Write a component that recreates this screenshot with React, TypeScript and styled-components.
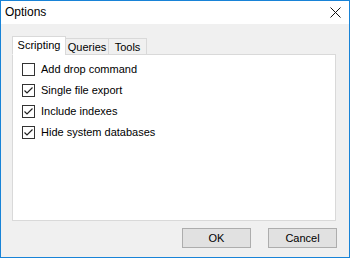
import React from 'react'
import styled, { createGlobalStyle } from 'styled-components'

const GlobalStyle = createGlobalStyle`
  html, body {
    margin: 0;
    padding: 0;
    background: #ffffff;
  }
  * {
    box-sizing: border-box;
  }
`

const Window = styled.div`
  width: 350px;
  height: 258px;
  border: 1px solid #1883d7;
  display: flex;
  flex-direction: column;
  font-family: 'Liberation Sans', Arial, sans-serif;
  font-size: 11px;
  color: #000;
  overflow: hidden;
`

const TitleBar = styled.div`
  height: 23px;
  background: #ffffff;
  display: flex;
  align-items: center;
  justify-content: space-between;
  padding: 0 8px 1px 4px;
`

const Title = styled.span`
  font-size: 12px;
`

const CloseIcon = styled.svg`
  width: 11px;
  height: 11px;
  margin-top: 1px;
`

const Body = styled.div`
  flex: 1;
  background: #f0f0f0;
  display: flex;
  flex-direction: column;
  padding: 12px 11px 0 11px;
`

const TabStrip = styled.div`
  display: flex;
  align-items: flex-end;
  height: 19px;
  margin-bottom: -1px;
  position: relative;
  z-index: 1;
`

const Tab = styled.div<{ $active?: boolean; $width: number }>`
  width: ${p => p.$width}px;
  height: ${p => (p.$active ? '19px' : '17px')};
  margin-left: -1px;
  display: flex;
  align-items: center;
  justify-content: center;
  padding-bottom: ${p => (p.$active ? '1px' : '0')};
  background: ${p => (p.$active ? '#ffffff' : '#f0f0f0')};
  border: 1px solid #d9d9d9;
  border-bottom: 1px solid ${p => (p.$active ? '#ffffff' : '#d9d9d9')};
  &:first-child {
    margin-left: 0;
  }
`

const Panel = styled.div`
  height: 167px;
  margin-right: 2px;
  background: #ffffff;
  border: 1px solid #d9d9d9;
  padding: 8px 0 0 9px;
  display: flex;
  flex-direction: column;
  gap: 8px;
`

const Row = styled.label`
  display: flex;
  align-items: center;
  gap: 6px;
  height: 13px;
  line-height: 13px;
`

const Box = styled.span`
  width: 13px;
  height: 13px;
  border: 1px solid #333333;
  background: #ffffff;
  display: flex;
  align-items: center;
  justify-content: center;
  flex-shrink: 0;
`

const ButtonRow = styled.div`
  display: flex;
  justify-content: flex-end;
  gap: 17px;
  margin-top: 7px;
  padding-right: 1px;
`

const Button = styled.button`
  width: 69px;
  height: 20px;
  background: #e1e1e1;
  border: 1px solid #adadad;
  font-family: 'Liberation Sans', Arial, sans-serif;
  font-size: 11px;
  color: #000;
  padding: 0;
  display: flex;
  align-items: center;
  justify-content: center;
`

const tabs = [
  { label: 'Scripting', width: 54, active: true },
  { label: 'Queries', width: 44, active: false },
  { label: 'Tools', width: 39, active: false },
]

const options = [
  { label: 'Add drop command', checked: false },
  { label: 'Single file export', checked: true },
  { label: 'Include indexes', checked: true },
  { label: 'Hide system databases', checked: true },
]

function CheckBox({ checked }: { checked: boolean }) {
  return (
    <Box>
      {checked && (
        <svg width="11" height="11" viewBox="0 0 11 11">
          <path d="M1.5 5.5 L4 8 L9.5 2.5" fill="none" stroke="#222" strokeWidth="1.2" />
        </svg>
      )}
    </Box>
  )
}

export default function App() {
  return (
    <>
      <GlobalStyle />
      <Window>
        <TitleBar>
          <Title>Options</Title>
          <CloseIcon viewBox="0 0 11 11">
            <path d="M0.5 0.5 L10.5 10.5 M10.5 0.5 L0.5 10.5" stroke="#111" strokeWidth="1" />
          </CloseIcon>
        </TitleBar>
        <Body>
          <TabStrip>
            {tabs.map(({ label, width, active }) => (
              <Tab key={label} $active={active} $width={width}>
                {label}
              </Tab>
            ))}
          </TabStrip>
          <Panel>
            {options.map(({ label, checked }) => (
              <Row key={label}>
                <CheckBox checked={checked} />
                <span>{label}</span>
              </Row>
            ))}
          </Panel>
          <ButtonRow>
            <Button>OK</Button>
            <Button>Cancel</Button>
          </ButtonRow>
        </Body>
      </Window>
    </>
  )
}
